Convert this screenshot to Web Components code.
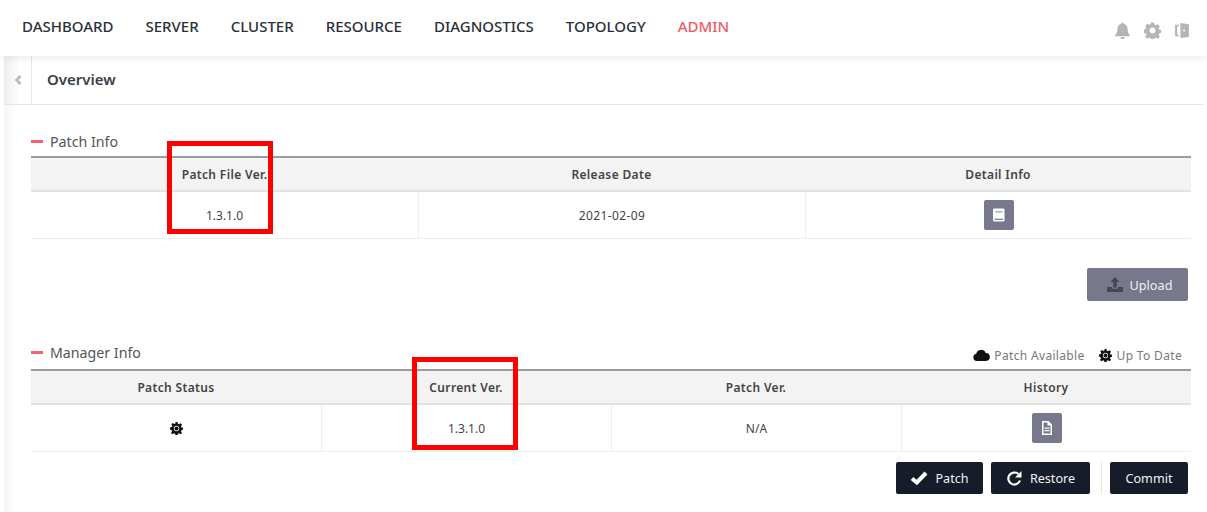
<!DOCTYPE html>
<html>
<head>
<meta charset="utf-8">
<style>
  html, body { margin: 0; padding: 0; background: #fff; }
  body { width: 1207px; height: 512px; overflow: hidden; font-family: "Noto Sans", "Noto Sans CJK KR", sans-serif; color: #333; position: relative; }
</style>
</head>
<body>
<top-nav></top-nav>
<page-head>Overview</page-head>
<main-area>
  <info-section title="Patch Info">
    <data-table cols="387px 387px 386px">
      <span slot="h">Patch File Ver.</span><span slot="h">Release Date</span><span slot="h">Detail Info</span>
      <span slot="c">1.3.1.0</span><span slot="c" style="letter-spacing:.4px">2021-02-09</span><span slot="c"><icon-btn icon="book"></icon-btn></span>
    </data-table>
  </info-section>
  <upload-row></upload-row>
  <info-section title="Manager Info" legend>
    <data-table cols="290px 290px 290px 290px">
      <span slot="h">Patch Status</span><span slot="h">Current Ver.</span><span slot="h">Patch Ver.</span><span slot="h">History</span>
      <span slot="c"><svg width="13" height="13" viewBox="0 0 16 16" style="display:block"><path fill="#111" d="M6.800 0h2.400l.5 2.300 1.400.6 2-1.300 1.700 1.700-1.300 2 .6 1.400 2.300.5v2.400l-2.300.5-.6 1.400 1.300 2-1.700 1.700-2-1.300-1.400.6-.5 2.300H6.800l-.5-2.300-1.400-.6-2 1.300-1.700-1.700 1.300-2-.6-1.400L0 9.200V6.800l2.300-.5.6-1.400-1.300-2 1.700-1.700 2 1.300 1.400-.6zM8 4.700a3.300 3.300 0 1 0 0 6.600 3.300 3.300 0 0 0 0-6.600z"/><circle cx="8" cy="8" r="2.500" fill="#111"/></svg></span>
      <span slot="c">1.3.1.0</span><span slot="c">N/A</span><span slot="c"><icon-btn icon="doc"></icon-btn></span>
    </data-table>
  </info-section>
  <action-row></action-row>
</main-area>
<red-mark style="left:167px;top:141px"></red-mark>
<red-mark style="left:412px;top:357px"></red-mark>

<script>
const ICONS = {
  bell: '<path d="M8 .5a1.100 1.100 0 0 1 1.100 1.200C11.400 2.200 12.800 4 12.800 6.500c0 3.500 1 4.700 2.200 5.900v1.100H1v-1.100C2.200 11.200 3.200 10 3.200 6.500 3.200 4 4.600 2.200 6.900 1.700A1.100 1.100 0 0 1 8 .5zM6 14.300h4a2 2 0 0 1-4 0z"/>',
  gear: '<path fill-rule="evenodd" d="M6.600.5h2.800l.4 2 1.300.6 1.800-1.100 2 2-1.100 1.800.6 1.300 2 .4v2.800l-2 .4-.6 1.300 1.100 1.800-2 2-1.800-1.100-1.300.6-.4 2H6.600l-.4-2-1.300-.6-1.800 1.100-2-2 1.100-1.800-.6-1.300-2-.4V7.100l2-.4.6-1.300L1.100 3.600l2-2 1.800 1.100 1.300-.6zM8 5.200a2.800 2.800 0 1 0 0 5.600 2.800 2.800 0 0 0 0-5.600z"/>',
  door: '<path fill-rule="evenodd" d="M1 2.500h3.500V4H3v8h1.500v1.500H1zM6 1l8 1v12l-8 1zM9.500 7a1 1 0 1 0 0 2 1 1 0 0 0 0-2z"/>'
};

class TopNav extends HTMLElement {
  connectedCallback() {
    const items = ["DASHBOARD", "SERVER", "CLUSTER", "RESOURCE", "DIAGNOSTICS", "TOPOLOGY", "ADMIN"];
    this.attachShadow({ mode: "open" }).innerHTML = `
    <style>
      :host { display: flex; align-items: center; height: 56px; padding: 0 16px 0 22px; box-sizing: border-box; background: #fff; box-shadow: 0 2px 8px rgba(0,0,0,.08); position: relative; z-index: 2; }
      nav { display: flex; gap: 32px; font-size: 15px; font-weight: 500; color: #2b2f3a; margin-top: -4px; }
      .admin { color: #ee5a66; }
      .tools { margin-left: auto; display: flex; gap: 13px; margin-top: 5px; }
      svg { width: 17px; height: 17px; fill: #b4b4b4; display: block; }
    </style>
    <nav>${items.map(i => `<span class="${i === "ADMIN" ? "admin" : ""}">${i}</span>`).join("")}</nav>
    <div class="tools">${["bell", "gear", "door"].map(i => `<svg viewBox="0 0 16 16">${ICONS[i]}</svg>`).join("")}</div>`;
  }
}

class PageHead extends HTMLElement {
  connectedCallback() {
    this.attachShadow({ mode: "open" }).innerHTML = `
    <style>
      :host { display: flex; height: 49px; box-sizing: border-box; margin: 0 4px; border-bottom: 1px solid #e6e6e6; }
      .toggle { width: 27px; border-right: 1px solid #e6e6e6; display: flex; align-items: center; justify-content: center; background: linear-gradient(90deg, #eee, #fff 60%); }
      h1 { margin: 0 0 0 15px; font-size: 15px; font-weight: 600; color: #3a3d45; line-height: 47px; }
    </style>
    <div class="toggle"><svg width="8" height="10" viewBox="0 0 8 10"><path d="M6.500 1 2.500 5l4 4" fill="none" stroke="#b9bcc2" stroke-width="2.800"/></svg></div>
    <h1><slot></slot></h1>`;
  }
}

class MainArea extends HTMLElement {
  connectedCallback() {
    this.attachShadow({ mode: "open" }).innerHTML = `
    <style>
      :host { display: block; height: 407px; padding: 24px 16px 0 31px; box-sizing: border-box; background: linear-gradient(90deg, #fff 4px, #f5f5f5 4px, #fff 16px); }
    </style>
    <slot></slot>`;
  }
}

class InfoSection extends HTMLElement {
  connectedCallback() {
    const legend = this.hasAttribute("legend");
    const legendHtml = legend ? `
      <div class="legend">
        <svg width="17" height="12" viewBox="0 0 17 12"><path fill="#111" d="M4 12a3.700 3.700 0 0 1-.8-7.300A5 5 0 0 1 12.700 4 4 4 0 0 1 13 12z"/></svg><span>Patch Available</span>
        <svg class="sun" width="13" height="13" viewBox="0 0 16 16"><path fill="#111" d="M6.800 0h2.400l.5 2.300 1.400.6 2-1.300 1.700 1.700-1.300 2 .6 1.400 2.300.5v2.400l-2.300.5-.6 1.400 1.300 2-1.700 1.700-2-1.300-1.400.6-.5 2.300H6.800l-.5-2.300-1.400-.6-2 1.300-1.700-1.700 1.300-2-.6-1.400L0 9.200V6.800l2.300-.5.6-1.400-1.300-2 1.700-1.700 2 1.300 1.400-.6zM8 4.700a3.300 3.300 0 1 0 0 6.600 3.300 3.300 0 0 0 0-6.600z"/><circle cx="8" cy="8" r="2.500" fill="#111"/></svg><span>Up To Date</span>
      </div>` : "";
    this.attachShadow({ mode: "open" }).innerHTML = `
    <style>
      :host { display: block; }
      .title { display: flex; align-items: center; height: 27px; font-size: 14.2px; color: #555; padding-bottom: ${legend ? 6 : 3}px; box-sizing: border-box; }
      .title i { width: 12px; height: 3px; background: #f2636f; margin-right: 7px; }
      .legend { margin-left: auto; margin-right: 9px; margin-top: 5px; display: flex; align-items: center; font-size: 12px; color: #777; letter-spacing: .33px; }
      .legend svg { margin-right: 4px; }
      .legend .sun { margin-left: 14px; margin-right: 5px; }
    </style>
    <div class="title"><i></i>${this.getAttribute("title")}${legendHtml}</div>
    <slot></slot>`;
    this.removeAttribute("title");
  }
}

class DataTable extends HTMLElement {
  connectedCallback() {
    const heads = [...this.querySelectorAll('[slot="h"]')];
    const cells = [...this.querySelectorAll('[slot="c"]')];
    const root = this.attachShadow({ mode: "open" });
    root.innerHTML = `
    <style>
      :host { display: block; }
      .t { display: grid; grid-template-columns: ${this.getAttribute("cols")}; border-top: 2px solid #9a9a9f; }
      .h, .c { display: flex; align-items: center; justify-content: center; font-size: 12px; box-sizing: border-box; }
      .h { height: 34px; background: #f3f3f3; font-weight: 600; color: #444; letter-spacing: .35px; border-bottom: 2px solid #e2e2e2; }
      .c { height: 47px; color: #444; border-bottom: 1px solid #eee; border-left: 1px solid #eee; }
      .c.first { border-left: 0; }
    </style>
    <div class="t"></div>`;
    const t = root.querySelector(".t");
    heads.forEach((h, i) => {
      h.slot = "h" + i;
      t.insertAdjacentHTML("beforeend", `<div class="h"><slot name="h${i}"></slot></div>`);
    });
    cells.forEach((c, i) => {
      c.slot = "c" + i;
      t.insertAdjacentHTML("beforeend", `<div class="c ${i === 0 ? "first" : ""}"><slot name="c${i}"></slot></div>`);
    });
  }
}

class IconBtn extends HTMLElement {
  connectedCallback() {
    const book = '<path fill="#fff" d="M3 1.500h9.500a1 1 0 0 1 1 1v11a1 1 0 0 1-1 1H3.500A1.500 1.500 0 0 1 2 13V2.500a1 1 0 0 1 1-1z"/><path fill="#b9bac6" d="M4.500 3.800h7v2h-7z"/><path fill="#77788c" d="M3.500 11.700h8.500v1.200H3.500z"/>';
    const doc = '<path fill="#fff" fill-rule="evenodd" d="M3 1h6.500L13 4.500V15H3zM4.500 2.500v11h7V5.500H8.500v-3z"/><path fill="#fff" d="M5.500 7.500h5v1.300h-5zM5.500 10h5v1.300h-5z"/>';
    this.attachShadow({ mode: "open" }).innerHTML = `
    <style>
      :host { display: block; margin-top: -1px; }
      div { width: 30px; height: 30px; border-radius: 2px; background: #77788c; display: flex; align-items: center; justify-content: center; }
    </style>
    <div><svg width="16" height="16" viewBox="0 0 16 16">${this.getAttribute("icon") === "book" ? book : doc}</svg></div>`;
  }
}

class UploadRow extends HTMLElement {
  connectedCallback() {
    this.attachShadow({ mode: "open" }).innerHTML = `
    <style>
      :host { display: flex; justify-content: flex-end; padding: 29px 3px 0 0; height: 33px; margin-bottom: 41px; }
      div { width: 101px; height: 33px; padding-left: 4px; box-sizing: border-box; border-radius: 2px; background: #77788c; color: #eef0f6; font-size: 12.7px; display: flex; align-items: center; justify-content: center; gap: 7px; }
    </style>
    <div><svg width="16" height="15" viewBox="0 0 16 15"><path fill="#46474f" d="M8 0l4.500 5H9.800v5.500H6.200V5H3.500zM0 10h5v1.800h6V10h5v5H0z"/></svg>Upload</div>`;
  }
}

class ActionRow extends HTMLElement {
  connectedCallback() {
    this.attachShadow({ mode: "open" }).innerHTML = `
    <style>
      :host { display: flex; justify-content: flex-end; align-items: center; gap: 8px; padding: 10px 3px 0 0; }
      div { height: 32px; border-radius: 2px; background: #171c2b; color: #f2f2f2; font-size: 12.6px; display: flex; align-items: center; justify-content: center; gap: 7px; box-sizing: border-box; }
      .p { width: 87px; } .r { width: 99px; } .m { width: 78px; }
      hr { width: 1px; height: 32px; border: 0; background: #e6e6e6; margin: 0 0 0 3px; }
    </style>
    <div class="p"><svg width="18" height="14" viewBox="0 0 18 14"><path fill="none" stroke="#fff" stroke-width="4" d="M2 7.500 6.800 11.500 16 2"/></svg>Patch</div>
    <div class="r"><svg width="17" height="17" viewBox="0 0 17 17"><path fill="none" stroke="#fff" stroke-width="2.200" d="M14 10.500A6 6 0 1 1 12.300 4"/><path fill="#fff" d="M15.500 1v6.500H9z"/></svg>Restore</div>
    <hr>
    <div class="m">Commit</div>`;
  }
}

class RedMark extends HTMLElement {
  connectedCallback() {
    this.attachShadow({ mode: "open" }).innerHTML = `
    <style>
      :host { position: absolute; width: 106px; height: 93px; box-sizing: border-box; border: 5px solid #f00; z-index: 5; }
    </style>`;
  }
}

[["top-nav", TopNav], ["page-head", PageHead], ["main-area", MainArea], ["info-section", InfoSection],
 ["data-table", DataTable], ["icon-btn", IconBtn], ["upload-row", UploadRow], ["action-row", ActionRow], ["red-mark", RedMark]]
  .forEach(([n, c]) => customElements.define(n, c));
</script>
</body>
</html>
